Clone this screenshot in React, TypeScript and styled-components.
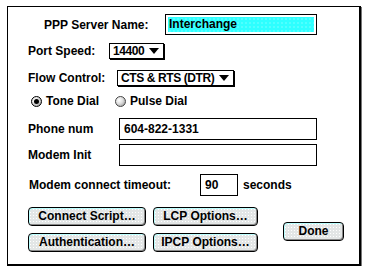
import React, { useState } from 'react';
import styled, { createGlobalStyle } from 'styled-components';

const GlobalStyle = createGlobalStyle`
  html, body {
    margin: 0;
    padding: 0;
    background: #fff;
  }
  body {
    font-family: "Liberation Sans", Arial, sans-serif;
    font-weight: bold;
    font-size: 12px;
    color: #000;
  }
`;

const Dialog = styled.div`
  box-sizing: border-box;
  margin: 6px 0 0 7px;
  width: 354px;
  height: 260px;
  border: 1px solid #000;
  border-right-width: 2px;
  border-bottom-width: 2px;
  box-shadow: 1px 1px 0 #777;
  background: #fff;
  padding: 0 0 0 20px;
  display: flex;
  flex-direction: column;
`;

const Row = styled.div<{ $mt: number; $h: number; $indent?: number }>`
  display: flex;
  align-items: center;
  margin-top: ${(p) => p.$mt}px;
  height: ${(p) => p.$h}px;
  padding-left: ${(p) => p.$indent || 0}px;
`;

const Label = styled.span<{ $w: number }>`
  width: ${(p) => p.$w}px;
  flex: none;
  white-space: nowrap;
`;

const HiliteField = styled.div`
  box-sizing: border-box;
  width: 152px;
  height: 21px;
  border: 1px solid #000;
  padding: 2px;
  background: #fff;
  display: flex;
`;

const HiliteText = styled.div`
  flex: 1;
  background-color: #2effff;
  background-image: radial-gradient(#7ff 0.6px, transparent 0.8px);
  background-size: 4px 4px;
  line-height: 15px;
  padding-left: 1px;
`;

const Field = styled.div<{ $w: number }>`
  box-sizing: border-box;
  width: ${(p) => p.$w}px;
  height: 100%;
  border: 1px solid #000;
  padding-left: 4px;
  display: flex;
  align-items: center;
`;

const Popup = styled.div`
  box-sizing: border-box;
  height: 16px;
  border: 1px solid #000;
  box-shadow: 1px 1px 0 #000;
  padding: 0 4px 0 3px;
  display: flex;
  align-items: center;
  gap: 5px;
  white-space: nowrap;
  letter-spacing: -0.4px;
`;

const Arrow = styled.span`
  width: 0;
  height: 0;
  border-left: 5px solid transparent;
  border-right: 5px solid transparent;
  border-top: 6px solid #000;
`;

const RadioOption = styled.label<{ $w: number }>`
  display: flex;
  align-items: center;
  gap: 4px;
  width: ${(p) => p.$w}px;
  cursor: default;
`;

const RadioDot = styled.span<{ $on: boolean }>`
  box-sizing: border-box;
  width: 11px;
  height: 11px;
  border-radius: 50%;
  border: 1px solid ${(p) => (p.$on ? '#000' : '#444')};
  background: radial-gradient(circle at 35% 35%, #fff 0%, #ddd 45%, #888 100%);
  display: flex;
  align-items: center;
  justify-content: center;
  &::after {
    content: '';
    width: 5px;
    height: 5px;
    border-radius: 50%;
    background: ${(p) => (p.$on ? '#000' : 'transparent')};
  }
`;

const Suffix = styled.span`
  margin-left: 5px;
`;

const ButtonArea = styled.div`
  display: flex;
  align-items: flex-start;
  margin-top: 11px;
`;

const ButtonGrid = styled.div`
  display: grid;
  grid-template-columns: 118px 105px;
  column-gap: 7px;
  row-gap: 7px;
`;

const Button = styled.button<{ $w?: number }>`
  box-sizing: border-box;
  height: 19px;
  width: ${(p) => (p.$w ? `${p.$w}px` : 'auto')};
  border: 1px solid #000;
  border-radius: 4px;
  background-color: #e3e6e6;
  background-image: radial-gradient(#fff 0.5px, transparent 0.7px);
  background-size: 3px 3px;
  box-shadow: inset 1px 1px 0 #bff, inset -1px -1px 0 #8a8a8a;
  font: inherit;
  color: #000;
  padding: 0;
  line-height: 17px;
`;

const DoneWrap = styled.div`
  margin: 15px 0 0 25px;
`;

export default function App() {
  const [tone, setTone] = useState(true);

  return (
    <>
      <GlobalStyle />
      <Dialog>
        <Row $mt={7} $h={21} $indent={16}>
          <Label $w={121}>PPP Server Name:</Label>
          <HiliteField>
            <HiliteText>Interchange</HiliteText>
          </HiliteField>
        </Row>
        <Row $mt={7} $h={17}>
          <Label $w={81}>Port Speed:</Label>
          <Popup>
            14400 <Arrow />
          </Popup>
        </Row>
        <Row $mt={10} $h={17}>
          <Label $w={89}>Flow Control:</Label>
          <Popup>
            CTS &amp; RTS (DTR) <Arrow />
          </Popup>
        </Row>
        <Row $mt={9} $h={12} $indent={3}>
          <RadioOption $w={84} onClick={() => setTone(true)}>
            <RadioDot $on={tone} />
            Tone Dial
          </RadioOption>
          <RadioOption $w={80} onClick={() => setTone(false)}>
            <RadioDot $on={!tone} />
            Pulse Dial
          </RadioOption>
        </Row>
        <Row $mt={11} $h={22}>
          <Label $w={91}>Phone num</Label>
          <Field $w={198}>604-822-1331</Field>
        </Row>
        <Row $mt={4} $h={22}>
          <Label $w={91}>Modem Init</Label>
          <Field $w={198} />
        </Row>
        <Row $mt={8} $h={22} $indent={1}>
          <Label $w={171}>Modem connect timeout:</Label>
          <Field $w={38}>90</Field>
          <Suffix>seconds</Suffix>
        </Row>
        <ButtonArea>
          <ButtonGrid>
            <Button>Connect Script…</Button>
            <Button>LCP Options…</Button>
            <Button>Authentication…</Button>
            <Button>IPCP Options…</Button>
          </ButtonGrid>
          <DoneWrap>
            <Button $w={61}>Done</Button>
          </DoneWrap>
        </ButtonArea>
      </Dialog>
    </>
  );
}
